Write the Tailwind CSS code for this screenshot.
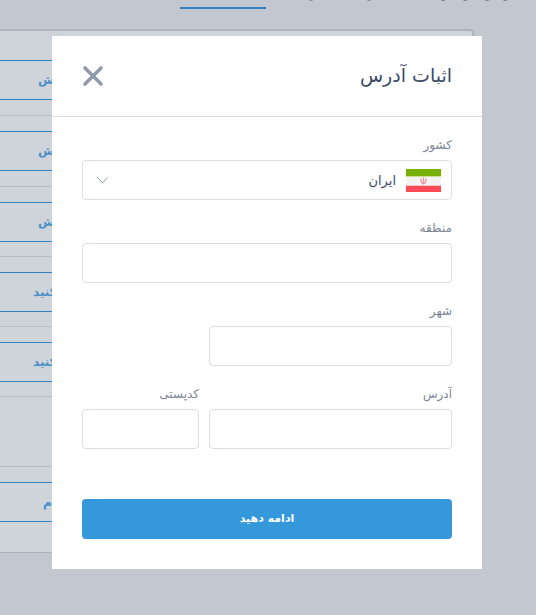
<!DOCTYPE html>
<html lang="fa">
<head>
  <meta charset="UTF-8">
  <meta name="viewport" content="width=device-width, initial-scale=1.0">
  <title>اثبات آدرس</title>
  <script src="https://cdn.jsdelivr.net/npm/@tailwindcss/browser@4"></script>
</head>
<body class="relative h-[615px] overflow-hidden bg-[#c3c7cf] font-['DejaVu_Sans',sans-serif]">
  <!-- Page behind the overlay -->
  <div class="w-[86px] ml-[180px] h-[9px] border-b-2 border-[#2f82c2]"></div>
  <div class="absolute top-[-13px] left-[248px] flex text-[11px] text-[#7d8494]" dir="ltr">
    <span class="w-[62px] text-left font-bold text-[#3c4a66]" dir="rtl">یی</span>
    <span class="w-[58px]">ر</span>
    <span class="w-[74px]">ر</span>
    <span class="w-[22px]">و</span>
    <span class="w-[22px]">و</span>
    <span class="w-[18px]">و</span>
    <span class="w-[18px]">و</span>
  </div>

  <div class="mt-[20px] w-[474px] bg-[#cfd3da] border-t-2 border-r-2 border-b border-[#afb3bc] rounded-tr-[4px]">
    <div class="h-[14px]"></div>
    <div class="h-[71px] pt-[15px] border-b border-[#b9bdc5]">
      <div class="h-[40px] flex items-center pl-[38px] border-y border-[#2f82c2] text-[12px] font-bold text-[#4a90c8]">ویرایش</div>
    </div>
    <div class="h-[71px] pt-[15px] border-b border-[#b9bdc5]">
      <div class="h-[40px] flex items-center pl-[38px] border-y border-[#2f82c2] text-[12px] font-bold text-[#4a90c8]">ویرایش</div>
    </div>
    <div class="h-[70px] pt-[15px] border-b border-[#b9bdc5]">
      <div class="h-[40px] flex items-center pl-[38px] border-y border-[#2f82c2] text-[12px] font-bold text-[#4a90c8]">ویرایش</div>
    </div>
    <div class="h-[70px] pt-[15px] border-b border-[#b9bdc5]">
      <div class="h-[40px] flex items-center pl-[33px] border-y border-[#2f82c2] text-[12px] font-bold text-[#4a90c8]">تایید کنید</div>
    </div>
    <div class="h-[70px] pt-[15px] border-b border-[#b9bdc5]">
      <div class="h-[40px] flex items-center pl-[33px] border-y border-[#2f82c2] text-[12px] font-bold text-[#4a90c8]">تایید کنید</div>
    </div>
    <div class="h-[70px] border-b border-[#b9bdc5]"></div>
    <div class="h-[85px] pt-[15px]">
      <div class="h-[40px] flex items-center pl-[43px] border-y border-[#2f82c2] text-[12px] font-bold text-[#4a90c8]">انجام</div>
    </div>
  </div>

  <!-- Modal -->
  <div class="absolute top-[36px] left-[52px] w-[430px] h-[533px] bg-white" dir="rtl">
    <div class="h-[81px] px-[30px] flex items-center justify-between border-b border-[#dcdee3]">
      <h2 class="pb-[2px] text-[19px] text-[#3c4a66]">اثبات آدرس</h2>
      <svg class="w-[22px] h-[22px]" viewBox="0 0 22 22" fill="none" stroke="#8f9aaa" stroke-width="3.6" stroke-linecap="round">
        <path d="M3 3 L19 19 M19 3 L3 19"/>
      </svg>
    </div>

    <div class="px-[30px] pt-[19px] pb-[30px]">
      <label class="h-[24px] pb-[7px] flex items-center text-[12px] text-[#7d8494]">کشور</label>
      <div class="h-[40px] flex items-center justify-between pr-[10px] pl-[14px] border border-[#dcdee3] rounded-[4px]">
        <div class="flex items-center gap-[10px]">
          <svg class="w-[35px] h-[23px]" viewBox="0 0 35 23">
            <rect width="35" height="7" fill="#78b000"/>
            <rect y="7" width="35" height="10" fill="#f4f4f4"/>
            <rect y="7" width="35" height="1" fill="#c9e08f"/>
            <rect y="16" width="35" height="1" fill="#fbc4c7"/>
            <rect y="17" width="35" height="6" fill="#ff4b55"/>
            <path d="M17.5 8.5 V15 M15 9.5 Q14.5 13.5 17.5 15 Q20.5 13.5 20 9.5" fill="none" stroke="#f08f96" stroke-width="1.2"/>
          </svg>
          <span class="pt-[2px] text-[13px] text-[#3c4a66]">ایران</span>
        </div>
        <svg class="w-[11px] h-[7px]" viewBox="0 0 11 7" fill="none" stroke="#8e99a8" stroke-width="1">
          <path d="M0.5 0.5 L5.5 6 L10.5 0.5"/>
        </svg>
      </div>

      <label class="mt-[19px] h-[24px] pb-[7px] flex items-center text-[12px] text-[#7d8494]">منطقه</label>
      <input class="block w-full h-[40px] border border-[#dcdee3] rounded-[4px]" type="text">

      <label class="mt-[19px] h-[24px] pb-[7px] flex items-center text-[12px] text-[#7d8494]">شهر</label>
      <input class="block w-[243px] h-[40px] border border-[#dcdee3] rounded-[4px]" type="text">

      <div class="mt-[19px] grid grid-cols-[243px_117px] gap-x-[10px]">
        <div>
          <label class="h-[24px] pb-[7px] flex items-center text-[12px] text-[#7d8494]">آدرس</label>
          <input class="block w-full h-[40px] border border-[#dcdee3] rounded-[4px]" type="text">
        </div>
        <div>
          <label class="h-[24px] pb-[7px] flex items-center text-[12px] text-[#7d8494]">کدپستی</label>
          <input class="block w-full h-[40px] border border-[#dcdee3] rounded-[4px]" type="text">
        </div>
      </div>

      <button class="mt-[50px] w-full h-[40px] bg-[#3498db] rounded-[4px] text-[11px] font-bold text-white">ادامه دهید</button>
    </div>
  </div>
</body>
</html>
